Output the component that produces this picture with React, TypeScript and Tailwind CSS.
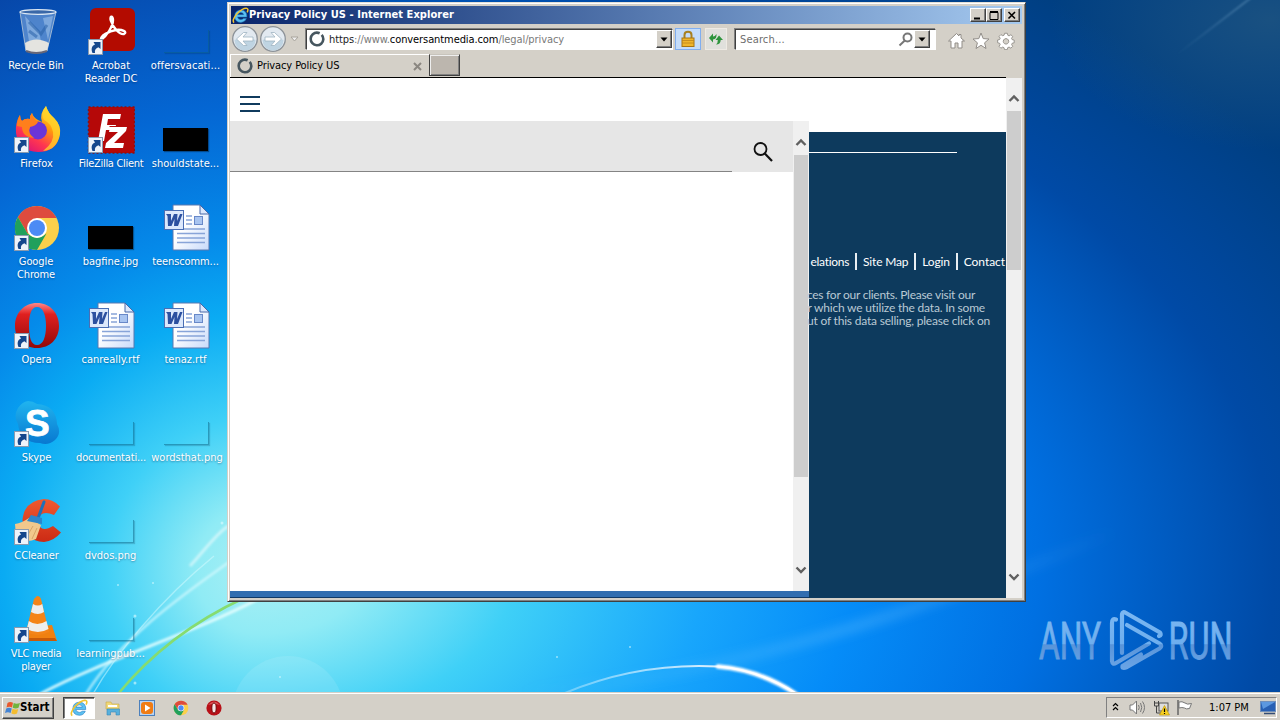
import React from "react";

const ui = "font-['DejaVu_Sans_Condensed','DejaVu_Sans',sans-serif]";

function Wallpaper() {
  return (
    <svg className="absolute inset-0" width="1280" height="720" viewBox="0 0 1280 720">
      <defs>
        <radialGradient id="wl" gradientUnits="userSpaceOnUse" cx="0" cy="0" r="1" gradientTransform="translate(260 570) scale(640 640)">
          <stop offset="0" stopColor="#aaf0f4" />
          <stop offset="0.1" stopColor="#90ebf5" />
          <stop offset="0.24" stopColor="#3fd0f7" />
          <stop offset="0.4" stopColor="#0aabf3" />
          <stop offset="0.52" stopColor="#058bea" />
          <stop offset="0.72" stopColor="#0467d4" />
          <stop offset="1" stopColor="#0745a6" />
        </radialGradient>
        <radialGradient id="wr" gradientUnits="userSpaceOnUse" cx="0" cy="0" r="1" gradientTransform="translate(260 570) scale(1236 744)">
          <stop offset="0" stopColor="#aaf0f4" />
          <stop offset="0.086" stopColor="#90ebf5" />
          <stop offset="0.207" stopColor="#3fd0f7" />
          <stop offset="0.36" stopColor="#18a6fc" />
          <stop offset="0.48" stopColor="#058cf8" />
          <stop offset="0.63" stopColor="#0070e2" />
          <stop offset="0.82" stopColor="#004aa6" />
          <stop offset="1" stopColor="#003f82" />
        </radialGradient>
        <radialGradient id="corner">
          <stop offset="0" stopColor="#2a5c80" stopOpacity="0.6" />
          <stop offset="1" stopColor="#2a5c80" stopOpacity="0" />
        </radialGradient>
        <linearGradient id="arc" x1="0" x2="1">
          <stop offset="0" stopColor="#fff" stopOpacity="0.3" />
          <stop offset="0.6" stopColor="#fff" stopOpacity="0.8" />
          <stop offset="1" stopColor="#fff" />
        </linearGradient>
        <linearGradient id="beam" gradientUnits="userSpaceOnUse" x1="520" y1="690" x2="1120" y2="540">
          <stop offset="0" stopColor="#7cccff" stopOpacity="0" />
          <stop offset="0.55" stopColor="#7cccff" stopOpacity="0.25" />
          <stop offset="1" stopColor="#7cccff" stopOpacity="0" />
        </linearGradient>
        <linearGradient id="streak" gradientUnits="userSpaceOnUse" x1="1175" y1="55" x2="1240" y2="6">
          <stop offset="0" stopColor="#6c9cc4" stopOpacity="0" />
          <stop offset="1" stopColor="#7cacd0" stopOpacity="0.5" />
        </linearGradient>
        <filter id="b1" x="-20%" y="-20%" width="140%" height="140%"><feGaussianBlur stdDeviation="0.9" /></filter>
        <filter id="b5" x="-20%" y="-20%" width="140%" height="140%"><feGaussianBlur stdDeviation="5" /></filter>
      </defs>
      <rect width="260.5" height="720" fill="url(#wl)" />
      <rect x="260" width="1020" height="720" fill="url(#wr)" />
      <ellipse cx="1270" cy="20" rx="220" ry="130" fill="url(#corner)" />
      <path d="M1175 56 L1252 -3" stroke="url(#streak)" strokeWidth="1.5" filter="url(#b1)" />
      <path d="M520 692 Q760 680 1120 530" stroke="url(#beam)" strokeWidth="12" fill="none" filter="url(#b5)" />
      <circle cx="288" cy="712" r="56" fill="#fff" fillOpacity=".1" />
      <path d="M40 694 C110 657 190 635 260 598" stroke="#e8ffff" strokeOpacity=".85" strokeWidth="3" fill="none" filter="url(#b1)" />
      <path d="M86 694 C120 640 175 600 232 560" stroke="#d8fbff" strokeOpacity=".7" strokeWidth="2.5" fill="none" filter="url(#b1)" />
      <path d="M93 694 C115 655 160 600 214 556" stroke="#d8fbff" strokeOpacity=".5" strokeWidth="1.5" fill="none" />
      <path d="M190 566 C205 550 215 535 228 526" stroke="#fff" strokeOpacity=".5" strokeWidth="3" fill="none" filter="url(#b1)" />
      <path d="M118 694 C150 655 190 623 244 598" stroke="#86dc70" strokeWidth="2.5" fill="none" />
      <path d="M437 694 C437 694 437 694 437 694 M437 694" fill="none" />
      <path d="M437 700" fill="none" />
      <path d="M565 693 C620 670 670 664 718 666.500 C750 669 775 680 797 694" stroke="url(#arc)" strokeWidth="2" fill="none" />
      <path d="M718 666.500 C750 669 775 680 796 694" stroke="#fff" strokeWidth="4.5" strokeLinecap="round" fill="none" filter="url(#b1)" />
      <g fill="#dffcff" fillOpacity=".6">
        <circle cx="118" cy="585" r="1" /><circle cx="153" cy="583" r="1" /><circle cx="135" cy="616" r="1.500" /><circle cx="222" cy="523" r="1.500" />
        <circle cx="135" cy="683" r="1.500" /><circle cx="280" cy="677" r="1" /><circle cx="630" cy="647" r="1" /><circle cx="557" cy="657" r="1" />
      </g>
    </svg>
  );
}

function Shortcut() {
  return (
    <g transform="translate(1 31)">
      <rect x=".5" y=".5" width="14" height="15" fill="#eef3fa" stroke="#8a9bb0" />
      <path d="M4.500 14 C2.500 9.500 4.500 6.500 7 5.600 L5.500 3 H12.500 V10 L10.400 8.200 C7.500 9.200 6.500 11 7 14Z" fill="#14468c" />
    </g>
  );
}

function Svg({ children, shortcut }: { children: React.ReactNode; shortcut?: boolean }) {
  return (
    <svg width="48" height="48" viewBox="0 0 48 48" className="shrink-0">
      {children}
      {shortcut && <Shortcut />}
    </svg>
  );
}

const RecycleBin = () => (
  <Svg>
    <path d="M7 4 L13 43 Q23 47 34 43 L43 4Z" fill="#7fa9dc" fillOpacity=".6" stroke="#9fb8d4" strokeWidth="1" />
    <path d="M12 8 L17 40 L30 42 L26 24Z M30 10 L40 8 L35 32Z" fill="#b8d4f2" fillOpacity=".45" />
    <path d="M16 14 L28 26 L34 17 M16 23 L24 29" stroke="#2860a8" strokeWidth="3" fill="none" opacity=".55" />
    <path d="M12 35 Q23 28 36 35 L34 43 Q23 46 13 43Z" fill="#e4e4e0" />
    <path d="M13 43 Q23 47 34 43" stroke="#667" strokeWidth="2" fill="none" />
    <ellipse cx="25" cy="4" rx="18" ry="2.400" fill="#3a68a8" stroke="#dce8f4" strokeWidth="1.200" />
  </Svg>
);

const Acrobat = () => (
  <Svg shortcut>
    <rect x="3" y="0" width="45" height="43" rx="6" fill="#b30b00" />
    <path d="M14 32 C20 28 26 18 26 12 C26 7 22 8 24 13 C26 20 33 27 37 26 C41 24 35 21 29 22 C22 23 13 28 14 32Z" fill="none" stroke="#fff" strokeWidth="2.400" />
  </Svg>
);

const Firefox = () => (
  <Svg shortcut>
    <defs>
      <linearGradient id="ff" x1=".85" y1="0" x2=".2" y2="1"><stop offset="0" stopColor="#fff04a" /><stop offset=".4" stopColor="#ff980e" /><stop offset=".7" stopColor="#ff3650" /><stop offset="1" stopColor="#d8107a" /></linearGradient>
    </defs>
    <path d="M7 9 Q7 13 9 15 Q12 12 17 13 Q17 9 19 7 Q20 11 25 14 L29 16 Q26 8 33 0 Q35 7 41 12 Q48 19 47 28 Q44 46 25 46 Q5 45 3 27 Q2 17 7 9Z" fill="url(#ff)" />
    <circle cx="25" cy="24.500" r="9" fill="#6a35d8" />
    <path d="M7 9 Q7 13 9 15 Q12 12 17 13 Q17 9 19 7 Q20 13 25 16 Q23 20 17 21 Q14 27 21 32 Q9 31 9 21 L4 20 Q4 13 7 9Z" fill="#ff7f1c" />
    <path d="M33 0 Q35 7 41 12 Q48 19 47 28 Q44 44 30 45 Q42 36 40 26 Q38 17 31 14 Q27 8 33 0Z" fill="#ffd62a" opacity=".75" />
  </Svg>
);

const FileZilla = () => (
  <Svg shortcut>
    <rect x="1.500" y="1" width="46" height="46" fill="#b50808" stroke="#8d1010" strokeWidth="1.500" strokeDasharray="2 2" />
    <path d="M11 35 L16 8 H34 L33 13 H21 L20 19 H29 L28 24 H19 L17 35Z" fill="#fff" />
    <path d="M23 21 H40 L39 25 L27 37 H37 L36 42 H18 L19 37 L31 26 H22Z" fill="#fff" />
    <path d="M22.500 20.500 H30" stroke="#b50808" strokeWidth="1" />
  </Svg>
);

function ChromeArt() {
  return (
    <>
      <circle cx="24" cy="24" r="22" fill="#fbd04b" />
      <path d="M4.900 13 A22 22 0 0 1 43.100 13 L43.100 14 H24 L14.500 29.500Z" fill="#de4b3e" />
      <path d="M4.900 13 A22 22 0 0 0 24 46 L33.500 29.500 Q24 38 14.500 29.500Z" fill="#20a05c" />
      <circle cx="24" cy="24" r="10" fill="#fff" />
      <circle cx="24" cy="24" r="8" fill="#4c8bf5" />
    </>
  );
}
const Chrome = () => <Svg shortcut><ChromeArt /></Svg>;

const Opera = () => (
  <Svg shortcut>
    <defs><linearGradient id="op" x1="0" y1="0" x2="0" y2="1"><stop offset="0" stopColor="#f88" /><stop offset=".25" stopColor="#e02020" /><stop offset="1" stopColor="#900808" /></linearGradient></defs>
    <path fillRule="evenodd" d="M24 1 C37 1 46 11 46 24 S37 46 24 46 S2 37 2 24 S11 1 24 1Z M24 5 C18 5 16 13 16 24 S18 43 24 43 S33 35 33 24 S30 5 24 5Z" fill="url(#op)" />
  </Svg>
);

const Skype = () => (
  <Svg shortcut>
    <defs><linearGradient id="sk" x1="0" y1="0" x2="0" y2="1"><stop offset="0" stopColor="#20b4ef" /><stop offset="1" stopColor="#0878d0" /></linearGradient></defs>
    <path d="M15 1 Q20 1 24 4 Q43 5 44 24 Q49 33 42 40 Q35 46 27 43 Q7 43 5 24 Q0 16 5 8 Q9 2 15 1Z" fill="url(#sk)" />
    <text x="12" y="35.500" fontSize="37" fontWeight="700" fill="#fff" stroke="#fff" strokeWidth=".8" className="font-['Liberation_Sans',sans-serif]">S</text>
  </Svg>
);

const CCleaner = () => (
  <Svg shortcut>
    <defs><linearGradient id="cc" x1="0" y1="0" x2="0" y2="1"><stop offset="0" stopColor="#ee5a30" /><stop offset="1" stopColor="#cc2a14" /></linearGradient></defs>
    <path d="M47 8.500 Q40 1 31 1 Q11 3 9.500 22 Q11 43 31 44 Q41 43 48 34.500 L40 28 Q27 36 24.500 23 Q27 11 41 17Z" fill="url(#cc)" />
    <path d="M28 27 L16 20 Q9 25 2 26 L3 38 Q12 46 23 41Z" fill="#f2c88c" />
    <path d="M13 40 L20 28 M19 41 L24 30" stroke="#d8a468" strokeWidth="1" />
    <path d="M31 4 L25.500 19" stroke="#1e70b8" strokeWidth="3" strokeLinecap="round" />
    <path d="M18 17 L29 20 L29 26 L14 23Z" fill="#2c86ca" />
  </Svg>
);

const Vlc = () => (
  <Svg shortcut>
    <path d="M11 32 L39 29 L44 45 H8Z" fill="#f08010" />
    <path d="M8 45 H44 L42 42 H9Z" fill="#c85a08" />
    <path d="M24 0 Q27 0 28 3 L36 36 Q25 42 13 36 L21 3Z" fill="#f48418" />
    <path d="M20 8 Q25 11 29.300 8 L31 16 Q25 20 18 16Z M15.800 25 Q24 31 33.500 25 L35.500 33 Q25 39 13.800 33Z" fill="#eee" />
  </Svg>
);

const Word = () => (
  <Svg>
    <defs><linearGradient id="pg" x1="0" y1="0" x2="1" y2="1"><stop offset="0.400" stopColor="#fff" /><stop offset="1" stopColor="#c8dafa" /></linearGradient></defs>
    <path d="M11 1 H38 L47 10 V46 H11Z" fill="url(#pg)" stroke="#5878b0" />
    <path d="M38 1 V10 H47Z" fill="#dce8fc" stroke="#4868a8" />
    <path d="M24 12 H30 M24 16 H30 M24 20 H30 M15 25 H43 M15 29.500 H43 M15 34 H43 M15 38.500 H43" stroke="#88a4d8" strokeWidth="1.300" />
    <rect x="32.500" y="12.500" width="8" height="8" fill="#a8c4f0" stroke="#6888c8" />
    <rect x="2.500" y="6.500" width="19" height="19" fill="#dce8fc" stroke="#4a6eb4" />
    <path d="M4 10 H9 L9 17 L12 10 H15.500 L15 17 L18 10 H20.500 L16 22 H12 L12.500 15 L9.500 22 H6 L5.500 12Z" fill="#2c50a0" />
  </Svg>
);

const BlackThumb = () => (
  <div className="flex h-12 w-12 shrink-0 items-end pb-[3px] pl-px"><div className="h-[23px] w-[45px] bg-black shadow-[1px_1px_1px_rgba(0,0,0,.35)]" /></div>
);
const ClearThumb = () => (
  <div className="flex h-12 w-12 shrink-0 items-end pb-[3px] pl-[2px]"><div className="h-[23px] w-[45px] border-r border-b border-[#0c6080]/50 shadow-[1px_1px_1px_rgba(0,40,70,.2)]" /></div>
);

const items: [string, () => React.ReactElement, string][] = [
  ["Recycle Bin", RecycleBin, "pr-px tracking-[-0.15px]"],
  ["Firefox", Firefox, ""],
  ["Google Chrome", Chrome, "pr-px tracking-[-0.1px]"],
  ["Opera", Opera, "tracking-[-0.1px]"],
  ["Skype", Skype, "tracking-[-0.1px]"],
  ["CCleaner", CCleaner, "tracking-[-0.1px]"],
  ["VLC media player", Vlc, "pr-px tracking-[-0.3px]"],
  ["Acrobat Reader DC", Acrobat, "pl-px"],
  ["FileZilla Client", FileZilla, "pl-px tracking-[-0.3px]"],
  ["bagfine.jpg", BlackThumb, ""],
  ["canreally.rtf", Word, ""],
  ["documentati...", ClearThumb, "pl-px tracking-[-0.15px]"],
  ["dvdos.png", ClearThumb, ""],
  ["learningpub...", ClearThumb, ""],
  ["offersvacati...", ClearThumb, "tracking-[0.1px]"],
  ["shouldstate...", BlackThumb, ""],
  ["teenscomm...", Word, "tracking-[-0.1px]"],
  ["tenaz.rtf", Word, ""],
  ["wordsthat.png", ClearThumb, "pl-[3px]"],
];

const wrapped = ["Google Chrome", "VLC media player", "Acrobat Reader DC"];

function DesktopIcons() {
  return (
    <div className="relative grid h-[686px] w-[223px] grid-flow-col grid-cols-[73px_75px_75px] grid-rows-7">
      {items.map(([name, Icon, cls]) => (
        <div key={name} className="flex h-[98px] flex-col items-center pt-2">
          <Icon />
          <div className={"mt-[3px] w-[64px] text-center text-[11px] leading-[13px] text-white [text-shadow:0_1px_2px_rgba(0,20,60,.4)] " + cls}>
            <span className={wrapped.includes(name) ? "" : "flex justify-center whitespace-nowrap"}>{name}</span>
          </div>
        </div>
      ))}
    </div>
  );
}

function IeLogo({ size }: { size: number }) {
  return (
    <svg width={size} height={size} viewBox="0 0 16 16" className="shrink-0">
      <path d="M14 9.400 H5.200 Q5.600 11.800 8.300 11.900 Q10 11.900 10.800 10.900 H13.600 Q12 14.500 8.300 14.500 Q2.600 14.200 2.500 8.600 Q2.800 3 8.400 2.800 Q14.200 3.100 14 9.400Z M5.300 7.200 H11 Q10.600 5.300 8.300 5.200 Q5.900 5.300 5.300 7.200Z" fillRule="evenodd" fill="#5cc0f0" stroke="#1a78c0" strokeWidth=".5" />
      <path d="M2 14.800 Q-.5 13 4.500 6.500 Q10.500 .6 14 1.300 Q15.800 1.800 14.300 5" fill="none" stroke="#f2c430" strokeWidth="1.400" />
    </svg>
  );
}

function Spinner() {
  return (
    <svg width="16" height="16" viewBox="0 0 16 16" className="shrink-0">
      <circle cx="8" cy="8" r="6.300" fill="none" stroke="#46565f" strokeWidth="2.600" strokeDasharray="36 3.600" transform="rotate(-42 8 8)" />
    </svg>
  );
}

const bevel = "border border-t-white border-l-white border-r-[#404040] border-b-[#404040] shadow-[inset_-1px_-1px_0_#808080] bg-[#d4d0c8]";

function WinButton({ children }: { children: React.ReactNode }) {
  return (
    <div className={"flex h-[14px] w-4 items-center justify-center " + bevel}>
      <svg width="12" height="11" viewBox="0 0 12 11" stroke="#000" fill="none">{children}</svg>
    </div>
  );
}

function DropButton() {
  return (
    <div className={"flex h-[18px] w-4 shrink-0 items-center justify-center " + bevel}>
      <svg width="8" height="5" viewBox="0 0 8 5"><path d="M.5 .5 H7.500 L4 4.500Z" fill="#000" /></svg>
    </div>
  );
}

function NavCircle({ flip }: { flip?: boolean }) {
  return (
    <svg width="28" height="28" viewBox="0 0 28 28" className="shrink-0">
      <circle cx="14" cy="14" r="12.300" fill="#e2e9f0" stroke="#8c9298" strokeWidth="1.300" />
      <path d="M3.500 15 Q14 10 24.500 15 A10.500 10.500 0 0 1 3.500 15Z" fill="#bfd4e2" />
      <path transform={flip ? "translate(28 0) scale(-1 1)" : undefined} d="M5.500 14 L12.500 7.500 H16 L12 12 H22 V16 H12 L16 20.500 H12.500Z" fill="#fff" stroke="#a0b4c2" strokeWidth=".8" />
    </svg>
  );
}

function ScrollArrow({ down }: { down?: boolean }) {
  return (
    <svg width="12" height="10" viewBox="0 0 12 10" className="shrink-0">
      <path d={down ? "M1.500 2.500 L6 7 L10.500 2.500" : "M1.500 7 L6 2.500 L10.500 7"} fill="none" stroke="#606060" strokeWidth="2.400" />
    </svg>
  );
}

function Toolbar() {
  return (
    <div className="flex h-[29px] items-center pt-px pl-px">
      <NavCircle />
      <NavCircle flip />
      <svg width="9" height="6" viewBox="0 0 9 6" className="ml-[3px]"><path d="M1 1 H8 L4.500 5Z" fill="#eee" stroke="#a8a49c" /></svg>
      <div className="ml-[7px] flex h-[21px] w-[367px] items-center border border-t-[#404040] border-l-[#404040] border-r-white border-b-white bg-white pl-[2px] text-[11px] shadow-[-1px_-1px_0_#808080]">
        <Spinner />
        <div className="ml-1 flex-1 pt-[2px] tracking-[-0.09px] whitespace-nowrap text-[#7a7a7a]">
          <span className="text-[#222]">https</span>://www.<span className="text-black">conversantmedia.com</span>/legal/privacy
        </div>
        <DropButton />
      </div>
      <div className="ml-[2px] flex h-[22px] w-[26px] items-center justify-center border border-[#80aef0] bg-[#c4dcfa]">
        <svg width="16" height="18" viewBox="0 0 16 18">
          <path d="M4.500 9 V5 Q4.500 1.800 8 1.800 Q11.500 1.800 11.500 5 V9" fill="none" stroke="#a88020" strokeWidth="2" />
          <rect x="2" y="8" width="12" height="8.500" fill="#efb52c" stroke="#a87410" />
          <path d="M2 10.500 H14 M2 13 H14" stroke="#bc841c" strokeWidth=".8" />
        </svg>
      </div>
      <div className="ml-1 flex h-[22px] w-[22px] items-center justify-center border border-[#eeeae4] bg-[#e0e0dc]">
        <svg width="18" height="16" viewBox="0 0 18 16" fill="#2d943c">
          <path d="M2 7 L6 2.500 V5.500 Q8 5.500 9.500 3 Q10 8 6 8.500 V11.500Z" />
          <path d="M16 9 L12 4.500 L8.500 9 H10.800 Q11 12 9 13.500 Q13.500 13.500 13.700 9Z" />
        </svg>
      </div>
      <div className="ml-[8px] flex h-[21px] w-[201px] items-center border border-t-[#404040] border-l-[#404040] border-r-white border-b-white bg-white pl-1 text-[11px] text-[#6d6d6d] shadow-[-1px_-1px_0_#808080]">
        <span className="flex-1 pt-[2px] tracking-[0.15px]">Search...</span>
        <svg width="16" height="15" viewBox="0 0 16 15" fill="none" stroke="#777" strokeWidth="2"><circle cx="9.500" cy="5.500" r="4" /><path d="M6.800 8.500 L1.500 13.500" /></svg>
        <DropButton />
        <div className="h-full w-[5px]" />
      </div>
      <svg width="70" height="18" viewBox="0 0 70 18" className="mt-[3px] ml-[11px]" fill="#fff" stroke="#918d88" strokeWidth="1">
        <path d="M1.500 9 L9.500 1.500 L12 4 V2.500 H14 V6 L17.500 9 H15 V16 H11 V11 H8 V16 H4 V9Z" />
        <path d="M34 1 L36.200 6.600 L42 7 L37.600 10.800 L39 16.500 L34 13.300 L29 16.500 L30.400 10.800 L26 7 L31.800 6.600Z" />
        <path transform="translate(5.300 .8) scale(.91)" fillRule="evenodd" d="M57.500 .5 h3 l.5 2.200 1.400 .7 2-1.300 2 2-1.300 2 .7 1.400 2.200 .5 v3 l-2.200 .5 -.6 1.400 1.200 2-2 2-2-1.200-1.500 .6 -.5 2.200 h-3 l-.6-2.200-1.400-.6-2 1.200-2-2 1.200-2-.6-1.400-2.200-.6 v-3 l2.200-.5 .6-1.400-1.200-2 2-2 2 1.200 1.500-.6Z M59 6.400 a3 3 0 1 0 .01 0Z" />
      </svg>
    </div>
  );
}

function Tabs() {
  return (
    <div className="flex h-6 w-[776px] border-b border-black">
      <div className="flex h-[23px] w-[199px] items-center border-t border-l border-white pl-[6px] text-[11px] text-black">
        <Spinner />
        <span className="ml-[4px] flex-1 pt-px tracking-[-0.1px] whitespace-nowrap">Privacy Policy US</span>
        <svg width="9" height="9" viewBox="0 0 9 9" className="mr-[7px]"><path d="M1 1 L8 8 M8 1 L1 8" stroke="#8b8781" strokeWidth="2" /></svg>
      </div>
      <div className="h-[22px] w-[31px] border border-r-[#404040] border-b-[#404040] border-l-[#404040] border-t-[#c8c4bc] bg-[#bcb6ae] shadow-[inset_1px_1px_0_#eee,inset_-1px_-1px_0_#808080]" />
    </div>
  );
}

const Divider = () => <i className="mx-[6px] h-[17px] w-[2px] bg-[#e8eef2]" />;

function Page() {
  return (
    <div className="flex h-[520px] w-[792px]">
      <div className="flex h-[520px] w-[776px] flex-col overflow-hidden bg-white">
        <div className="h-[43px] shrink-0 pt-[18px] pl-[10px]">
          <div className="flex w-5 flex-col gap-[5px]">
            <div className="h-[2px] bg-[#103b5e]" /><div className="h-[2px] bg-[#103b5e]" /><div className="h-[2px] bg-[#103b5e]" />
          </div>
        </div>
        <div className="flex h-[477px]">
          <div className="flex w-[579px] flex-col">
            <div className="flex h-[470px]">
              <div className="w-[563px]">
                <div className="flex h-[51px] bg-[#e6e6e6]">
                  <div className="w-[502px] border-b border-[#848484]" />
                  <svg width="22" height="22" viewBox="0 0 22 22" className="mt-5 ml-5" fill="none" stroke="#111"><circle cx="8.500" cy="8" r="6" strokeWidth="1.800" /><path d="M12.800 12.500 L20 20" strokeWidth="2.200" /></svg>
                </div>
              </div>
              <div className="flex w-4 flex-col items-center bg-[#f0f0f0]">
                <div className="flex h-[34px] items-center pt-[10px]"><ScrollArrow /></div>
                <div className="h-[322px] w-[14px] bg-[#cdcdcd]" />
                <div className="flex flex-1 items-end pb-4"><ScrollArrow down /></div>
              </div>
            </div>
            <div className="h-[7px] border-b border-[#123a66] bg-[#326eb0]" />
          </div>
          <div className="w-[197px] pt-[11px]">
            <div className="h-[466px] bg-[#0d3a5d] pt-5 font-[Lato,sans-serif] text-[12px]">
              <div className="h-px w-[148px] bg-white" />
              <div className="mt-[100px] flex h-[17px] items-center justify-end tracking-[-0.18px] whitespace-nowrap text-white">
                <span className="tracking-[-0.3px]">elations</span>
                <Divider /><span>Site Map</span>
                <Divider /><span>Login</span>
                <Divider /><span className="mr-px tracking-[-0.05px]">Contact</span>
              </div>
              <div className="mt-[18px] flex flex-col items-end leading-[13px] whitespace-nowrap text-[#b9c9d4]">
                <span className="mr-[31px] tracking-[-0.26px]">ces for our clients. Please visit our</span>
                <span className="mr-[21px] tracking-[-0.2px]">r which we utilize the data. In some</span>
                <span className="mr-[16px] tracking-[-0.2px]">ut of this data selling, please click on</span>
              </div>
            </div>
          </div>
        </div>
      </div>
      <div className="flex w-4 flex-col items-center bg-[#f0f0f0]">
        <div className="flex h-[33px] items-center pt-[9px]"><ScrollArrow /></div>
        <div className="h-[159px] w-[14px] bg-[#cdcdcd]" />
        <div className="flex flex-1 items-end pb-4"><ScrollArrow down /></div>
      </div>
    </div>
  );
}

function BrowserWindow() {
  return (
    <div className="absolute top-[2px] left-[227px] h-[600px] w-[799px] border border-t-[#e4e0d8] border-l-[#d4d0c8] border-r-[#404040] border-b-[#404040] bg-[#d4d0c8] pt-[2px] pl-[2px] shadow-[inset_1px_1px_0_#fff,inset_-1px_-1px_0_#808080]">
      <div className="mt-px mr-[3px] ml-px flex h-[18px] items-center bg-linear-to-r from-[#0a246a] to-[#a6caf0] pr-[2px] pl-px">
        <IeLogo size={17} />
        <span className="flex-1 text-[11px] font-bold tracking-[0.05px] text-white">Privacy Policy US - Internet Explorer</span>
        <WinButton><path d="M2 8.500 H8" strokeWidth="2" /></WinButton>
        <WinButton><path d="M2 2.500 H10 V9.500 H2Z M2 1.500 H10" /></WinButton>
        <div className="w-[2px]" />
        <WinButton><path d="M2.500 2 L9 8.500 M9 2 L2.500 8.500" strokeWidth="1.600" /></WinButton>
      </div>
      <Toolbar />
      <div className="h-px" />
      <Tabs />
      <Page />
    </div>
  );
}

function Watermark() {
  return (
    <svg className="absolute top-[600px] left-[1030px]" width="230" height="80" viewBox="0 -5 230 80">
      <defs>
        <linearGradient id="wm" gradientUnits="userSpaceOnUse" x1="0" y1="5" x2="0" y2="66"><stop offset="0" stopColor="#7cb8f2" /><stop offset=".55" stopColor="#6eaeee" /><stop offset=".57" stopColor="#5894da" /><stop offset="1" stopColor="#6ca6e6" /></linearGradient>
      </defs>
      <g fill="url(#wm)" stroke="url(#wm)" strokeWidth=".9" className="font-[Roboto,sans-serif]" fontSize="51">
        <text x="9" y="54" textLength="62" lengthAdjust="spacingAndGlyphs">ANY</text>
        <text x="138.500" y="54" textLength="64" lengthAdjust="spacingAndGlyphs">RUN</text>
      </g>
      <g fill="none" stroke="url(#wm)" strokeWidth="4.200" strokeLinejoin="round" strokeLinecap="round">
        <path d="M86 14.500 Q82 13 82 18 V56 Q82.500 60 86 58 L119 38.500" />
        <path d="M92 48 V9 Q92.500 6 96 8 L130 27.500 Q132 30 129 31" />
        <path d="M97 20 L129.500 38.500 Q133 41 129.500 43.500 L97 62 Q92 64 92.500 61 L111 49.500" />
      </g>
    </svg>
  );
}

function Taskbar() {
  return (
    <div className="absolute bottom-0 left-0 flex h-7 w-[1280px] items-center border-t border-[#d4d0c8] bg-[#d4d0c8] pt-[2px] pr-[3px] pl-[2px] text-[11px] text-black shadow-[inset_0_1px_0_#fff]">
      <div className={"flex h-[22px] w-[52px] items-center pl-[2px] text-[11.5px] font-bold " + bevel}>
        <svg width="16" height="16" viewBox="0 0 16 16" className="shrink-0">
          <path d="M2.500 3 Q5 1 8 2.800 L7 7.500 Q4.500 6 1.500 7.500Z" fill="#e8582c" />
          <path d="M8.700 3 Q11.500 4.500 15 3 L13.500 7.800 Q10.500 9 7.700 7.700Z" fill="#70b43c" />
          <path d="M1.200 8.500 Q4 7 6.800 8.500 L5.600 13 Q3 11.500 0 13Z" fill="#4484d4" />
          <path d="M7.500 8.700 Q10.300 10 13.200 8.900 L12 13.500 Q9 15 6.300 13.300Z" fill="#f4bc30" />
        </svg>
        <span className="-ml-px">Start</span>
      </div>
      <div className="ml-[9px] flex h-[22px] w-8 items-center justify-center border border-t-[#404040] border-l-[#404040] border-r-white border-b-white bg-white shadow-[inset_1px_1px_0_#808080]"><IeLogo size={18} /></div>
      <svg width="16" height="16" viewBox="0 0 16 16" className="ml-[10px]">
        <path d="M1 2 H6 L7 4 H14 V9 H1Z" fill="#f0d878" stroke="#c8a848" strokeWidth=".6" />
        <path d="M3 6 H12" stroke="#fff" strokeWidth="2" />
        <path d="M2 15 V9 H14.500 V15 H11 V12 H5.500 V15Z" fill="#58b0dc" stroke="#3888b8" strokeWidth=".6" />
      </svg>
      <svg width="16" height="16" viewBox="0 0 16 16" className="ml-[18px]">
        <rect x=".5" y=".5" width="15" height="15" fill="#b8d4f4" stroke="#4c80bc" /><rect x="2" y="2" width="12" height="12" rx="3" fill="#f07c14" /><path d="M6 4.500 L11.500 8 L6 11.500Z" fill="#fff" />
      </svg>
      <svg width="16" height="16" viewBox="0 0 48 48" className="ml-[18px]"><ChromeArt /></svg>
      <svg width="16" height="16" viewBox="0 0 16 16" className="ml-[17px]"><circle cx="8" cy="8" r="7.600" fill="#b81018" /><path d="M2 5 Q8 -2 14 5 Q8 3 2 5Z" fill="#f08080" opacity=".6" /><ellipse cx="8" cy="8" rx="2.200" ry="5" fill="#f4e8e8" stroke="#700808" /></svg>
      <div className="ml-auto flex h-[21px] w-[171px] items-center border border-t-[#808080] border-l-[#808080] border-r-white border-b-white pl-[5px]">
        <svg width="7" height="9" viewBox="0 0 7 9" fill="none" stroke="#000" strokeWidth="1.200" className="mb-[3px]"><path d="M1 4 L3.500 1.500 L6 4 M1 8 L3.500 5.500 L6 8" /></svg>
        <svg width="17" height="15" viewBox="0 0 17 15" className="ml-[10px]" fill="none" stroke="#777" strokeWidth="1"><path d="M1 5 H3.500 L7.500 1 V14 L3.500 10 H1Z" fill="#fff" /><path d="M9.500 5 Q11 7.500 9.500 10 M11.500 3 Q14 7.500 11.500 12 M13.500 1.500 Q17.500 7.500 13.500 13.500" /></svg>
        <svg width="17" height="16" viewBox="0 0 17 16" className="ml-[7px]"><rect x="6" y="3" width="9" height="8" fill="#ddd" stroke="#555" /><path d="M1.500 1 V6 H5.500 V1 M3.500 6 V13 H9 M1.500 3 H5.500" fill="none" stroke="#444" /><path d="M11.500 5.500 L16.500 15 H6.500Z" fill="#f8d020" stroke="#b89000" strokeWidth=".6" /><path d="M11.500 8.500 V12 M11.500 13 V14" stroke="#000" strokeWidth="1.200" /></svg>
        <svg width="17" height="15" viewBox="0 0 17 15" className="ml-[6px]"><path d="M3 2 Q6 1 9 3 Q11 5 15.500 3.500 L13.500 8.500 Q10 9.500 8.500 8 Q6 7 3 8Z" fill="#fff" stroke="#777" /><path d="M2 0 V15" stroke="#666" strokeWidth="1.500" /></svg>
        <span className="ml-[16px] pt-px whitespace-nowrap">1:07 PM</span>
        <svg width="16" height="14" viewBox="0 0 16 14" className="ml-auto"><rect x=".5" y=".5" width="15" height="10" fill="#2860b4" stroke="#7090bc" /><path d="M1 1 H15 L3 8Z" fill="#5c98e0" /><path d="M4 12.500 H15" stroke="#334c74" strokeWidth="1.500" /></svg>
      </div>
    </div>
  );
}

export default function App() {
  return (
    <div className={"relative h-[720px] w-[1280px] overflow-hidden " + ui}>
      <Wallpaper />
      <DesktopIcons />
      <Watermark />
      <BrowserWindow />
      <Taskbar />
    </div>
  );
}
